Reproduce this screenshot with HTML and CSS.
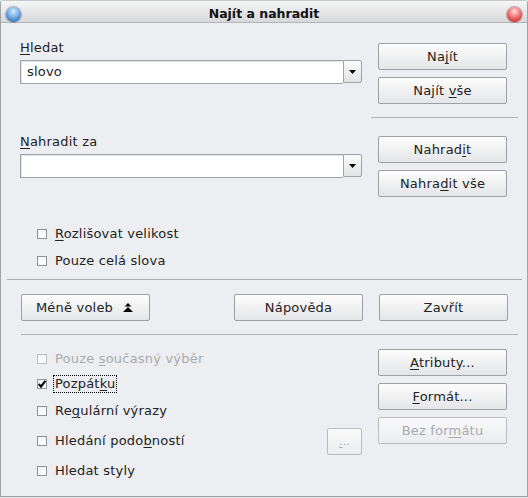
FILE: index.html
```html
<!DOCTYPE html>
<html lang="cs">
<head>
<meta charset="utf-8">
<title>Najít a nahradit</title>
<link rel="stylesheet" href="styles.css">
</head>
<body>
<div class="window">
  <div class="titlebar">
    <span class="orb orb-blue"></span>
    <span class="title">Najít a nahradit</span>
    <span class="orb orb-red"></span>
  </div>
  <div class="content">
    <div class="row row-search">
      <div class="col-left">
        <div class="label"><u>H</u>ledat</div>
        <div class="combo">
          <div class="field">slovo</div>
          <div class="drop"><svg width="7" height="4" viewBox="0 0 7 4"><path d="M0 0H7L3.5 4Z" fill="#000"/></svg></div>
        </div>
      </div>
      <div class="col-right">
        <div class="btn">Na<u>j</u>ít</div>
        <div class="btn">Najít <u>v</u>še</div>
      </div>
    </div>
    <div class="sep sep-right"></div>
    <div class="row row-replace">
      <div class="col-left">
        <div class="label"><u>N</u>ahradit za</div>
        <div class="combo">
          <div class="field"></div>
          <div class="drop"><svg width="7" height="4" viewBox="0 0 7 4"><path d="M0 0H7L3.5 4Z" fill="#000"/></svg></div>
        </div>
      </div>
      <div class="col-right col-right-2">
        <div class="btn">Nahrad<u>i</u>t</div>
        <div class="btn">Nahra<u>d</u>it vše</div>
      </div>
    </div>
    <div class="checks checks-top">
      <div class="check"><span class="box"></span><span><u>R</u>ozlišovat velikost</span></div>
      <div class="check check-2"><span class="box"></span><span>Pouze celá slova</span></div>
    </div>
    <div class="sep sep-full"></div>
    <div class="btnrow">
      <div class="btn btn-more">Méně voleb <svg class="dbl" width="10" height="9" viewBox="0 0 10 9"><path d="M5 0L8.5 3.5H1.5Z M5 4L10 9H0Z" fill="#000"/></svg></div>
      <div class="btn btn-help">Nápověda</div>
      <div class="btn btn-close">Zavřít</div>
    </div>
    <div class="sep sep-mid"></div>
    <div class="lower">
      <div class="lower-left">
        <div class="check disabled l1"><span class="box"></span><span>Pouze <u>s</u>oučasný výběr</span></div>
        <div class="check l2"><span class="box"><svg width="8" height="8" viewBox="0 0 8 8"><path d="M0.8 4L3 6.6L7.4 0.8" fill="none" stroke="#000" stroke-width="2.2"/></svg></span><span class="focus">Pozpát<u>k</u>u</span></div>
        <div class="check l3"><span class="box"></span><span>Re<u>g</u>ulární výrazy</span></div>
        <div class="check l4"><span class="box"></span><span>Hledání podo<u>b</u>ností</span></div>
        <div class="check l5"><span class="box"></span><span>Hledat styly</span></div>
      </div>
      <div class="btn btn-small disabled"><u>.</u>..</div>
      <div class="col-right col-right-3">
        <div class="btn"><u>A</u>tributy...</div>
        <div class="btn"><u>F</u>ormát...</div>
        <div class="btn disabled">Bez for<u>m</u>átu</div>
      </div>
    </div>
  </div>
</div>
</body>
</html>
```

FILE: styles.css
```css
* { box-sizing: border-box; }
html, body { margin: 0; padding: 0; background: #e4e5e8; }
body {
  font-family: "DejaVu Sans", sans-serif;
  font-size: 13px;
  line-height: 16px;
  letter-spacing: 0.2px;
  color: #222;
}
u { text-decoration: underline; text-underline-offset: 2px; text-decoration-thickness: 1px; }

.window {
  width: 528px;
  height: 497px;
  background: #edeef1;
  border-left: 1px solid #a2a4a8;
  border-right: 1px solid #a2a4a8;
  border-bottom: 1px solid #9a9ca0;
  border-radius: 4px 4px 0 0;
  overflow: hidden;
}

.titlebar {
  height: 23px;
  padding-top: 3px;
  line-height: 19px;
  background: linear-gradient(#f6f6f6, #d7d8da);
  border-bottom: 1px solid #b4b5b8;
  border-top: 1px solid #c8c9cc;
  display: flex;
  justify-content: center;
  position: relative;
}
.title {
  font-weight: bold;
  font-size: 12.5px;
  letter-spacing: 0;
  color: #111;
}
.orb {
  position: absolute;
  top: 6px;
  width: 15px;
  height: 15px;
  border-radius: 50%;
}
.orb-blue {
  left: 5px;
  background: radial-gradient(circle at 50% 30%, #d4ebff 0, #8bbcea 35%, #3f7ec2 75%, #2a5b94 100%);
  box-shadow: 0 0 0 1px rgba(40, 70, 110, 0.35);
}
.orb-red {
  right: 5px;
  background: radial-gradient(circle at 50% 30%, #ffe0e0 0, #f28b8b 35%, #d93a3a 75%, #a82424 100%);
  box-shadow: 0 0 0 1px rgba(120, 40, 40, 0.35);
}

.content {
  padding-left: 19px;
}

.row { display: flex; }
.col-left { width: 342px; }
.col-right {
  width: 129px;
  margin-left: 16px;
  display: flex;
  flex-direction: column;
  gap: 7px;
}
.row-search .col-left { padding-top: 17px; }
.row-search .col-right { padding-top: 20px; }
.row-replace .col-left { padding-top: 16px; }
.row-replace .col-right { padding-top: 18px; }

.label { height: 16px; }
.combo {
  margin-top: 4px;
  display: flex;
  height: 24px;
}
.field {
  flex: 1;
  background: #fff;
  border: 1px solid #9fa2a7;
  border-right: none;
  padding-left: 6px;
  line-height: 22px;
  box-shadow: inset 1px 1px 0 #e2e3e6;
}
.drop {
  width: 19px;
  height: 23px;
  border: 1px solid #9fa2a7;
  border-radius: 0 2px 2px 0;
  background: linear-gradient(#fbfbfb, #e3e4e6);
  display: flex;
  align-items: center;
  justify-content: center;
  padding-top: 1px;
}

.btn {
  height: 27px;
  border: 1px solid #9ea0a5;
  border-radius: 2px;
  background: linear-gradient(#fdfdfd, #e4e5e7);
  text-align: center;
  line-height: 25px;
  white-space: nowrap;
}
.btn.disabled {
  color: #a9abaf;
  border-color: #b9bbbf;
  background: linear-gradient(#fafafa, #ebecee);
}

.sep { height: 1px; background: #b2b4b8; }
.sep-right { margin-top: 13px; margin-left: 351px; width: 147px; }
.sep-full { margin-top: 10px; margin-left: -13px; width: 515px; background: #a9abb0; }
.sep-mid { margin-top: 13px; margin-left: 1px; width: 497px; }

.checks-top { padding-top: 29px; }
.check {
  display: flex;
  align-items: center;
  height: 16px;
  padding-left: 17px;
  white-space: nowrap;
}
.check-2 { margin-top: 11px; }
.box {
  width: 10px;
  height: 10px;
  border: 1px solid #8e9196;
  background: linear-gradient(#f4f4f5, #ffffff);
  margin-right: 8px;
  flex: none;
  display: flex;
  align-items: center;
  justify-content: center;
}
.check.disabled { color: #a9abaf; }
.check.disabled .box { border-color: #b9bbbf; }
.focus {
  outline: 1px dotted #000;
  outline-offset: 0;
  padding: 0 1px;
  margin-left: -1px;
}

.btnrow {
  display: flex;
  margin-top: 14px;
}
.btnrow .btn { width: 129px; }
.btn-more {
  margin-left: 1px;
  display: flex;
  align-items: center;
  justify-content: center;
  gap: 10px;
  padding-right: 2px;
}
.btn-help { margin-left: 84px; }
.btn-close { margin-left: 16px; }

.lower { display: flex; align-items: flex-start; }
.lower-left { width: 307px; }
.l1 { margin-top: 16px; }
.l2 { margin-top: 9px; }
.l3 { margin-top: 11px; }
.l4 { margin-top: 14px; }
.l5 { margin-top: 14px; }
.btn-small {
  width: 35px;
  height: 27px;
  margin-top: 93px;
  font-size: 11px;
}
.col-right-3 {
  margin-left: 16px;
  padding-top: 14px;
}
```
